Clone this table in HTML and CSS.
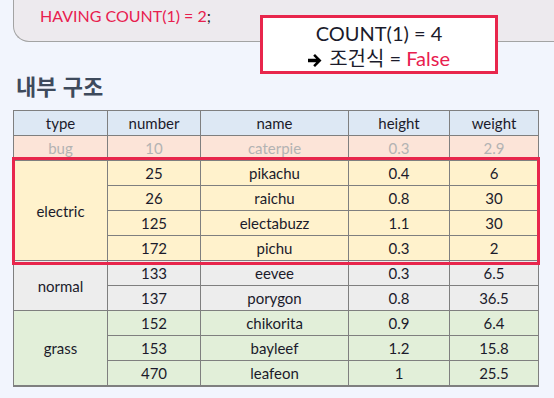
FILE: index.html
```html
<!DOCTYPE html>
<html lang="ko">
<head>
    <meta charset="UTF-8">
    <meta name="viewport" content="width=device-width, initial-scale=1.0">
    <title>내부 구조</title>
    <link rel="stylesheet" href="styles.css">
</head>
<body>
    <div class="code-box">
        <span class="keyword">HAVING COUNT(1) = 2</span>;
    </div>
    <div class="result-box">
        <div>COUNT(1) = 4</div>
        <div>
            <svg class="arrow" width="15" height="13" viewBox="0 0 15 13">
                <path d="M0 4.8 H8.2 L5.2 1.8 L7 0 L13.5 6.5 L7 13 L5.2 11.2 L8.2 8.2 H0 Z" fill="#000"/>
            </svg>
            조건식 = <span class="false">False</span>
        </div>
    </div>

    <h2>내부 구조</h2>

    <div class="table-wrap">
        <table>
            <thead>
                <tr>
                    <th class="col-type">type</th>
                    <th class="col-number">number</th>
                    <th class="col-name">name</th>
                    <th class="col-height">height</th>
                    <th class="col-weight">weight</th>
                </tr>
            </thead>
            <tbody>
                <tr class="bug">
                    <td>bug</td><td>10</td><td>caterpie</td><td>0.3</td><td>2.9</td>
                </tr>
                <tr class="electric">
                    <td rowspan="4">electric</td><td>25</td><td>pikachu</td><td>0.4</td><td>6</td>
                </tr>
                <tr class="electric">
                    <td>26</td><td>raichu</td><td>0.8</td><td>30</td>
                </tr>
                <tr class="electric">
                    <td>125</td><td>electabuzz</td><td>1.1</td><td>30</td>
                </tr>
                <tr class="electric">
                    <td>172</td><td>pichu</td><td>0.3</td><td>2</td>
                </tr>
                <tr class="normal">
                    <td rowspan="2">normal</td><td>133</td><td>eevee</td><td>0.3</td><td>6.5</td>
                </tr>
                <tr class="normal">
                    <td>137</td><td>porygon</td><td>0.8</td><td>36.5</td>
                </tr>
                <tr class="grass">
                    <td rowspan="3">grass</td><td>152</td><td>chikorita</td><td>0.9</td><td>6.4</td>
                </tr>
                <tr class="grass">
                    <td>153</td><td>bayleef</td><td>1.2</td><td>15.8</td>
                </tr>
                <tr class="grass">
                    <td>470</td><td>leafeon</td><td>1</td><td>25.5</td>
                </tr>
            </tbody>
        </table>
        <div class="highlight"></div>
    </div>
</body>
</html>
```

FILE: styles.css
```css
* {
    margin: 0;
    padding: 0;
    box-sizing: border-box;
}
body {
    font-family: Lato, "Noto Sans CJK KR", sans-serif;
    background-color: #f2f5fd;
    color: #1b1b2b;
    position: relative;
    min-height: 100vh;
}

/* 상단 코드 박스 */
.code-box {
    margin-left: 13px;
    height: 42px;
    padding-left: 26px;
    line-height: 32px;
    font-size: 16px;
    background-color: #edeaee;
    border-left: 1px solid #a3a3a3;
    border-bottom: 1px solid #a3a3a3;
    border-bottom-left-radius: 16px;
}
.keyword {
    color: #e8204e;
}

.result-box {
    position: absolute;
    left: 260px;
    top: 15px;
    width: 238px;
    height: 59px;
    background: #fff;
    border: 3px solid #e8264c;
    text-align: center;
    font-size: 20px;
    line-height: 25px;
    padding-top: 3px;
}
.arrow {
    vertical-align: -1px;
    margin-right: 1px;
}
.false {
    color: #e8204e;
}

h2 {
    margin: 28px 0 0 16px;
    font-size: 22px;
    line-height: 30px;
    font-weight: 700;
    font-family: "Noto Sans CJK KR", sans-serif;
    color: #3e4a5c;
}

/* 테이블 */
.table-wrap {
    position: relative;
    margin: 10px 0 0 13px;
    width: 525px;
}
table {
    border-collapse: collapse;
    width: 525px;
    table-layout: fixed;
    font-size: 15px;
    border-bottom: 2px solid #7f7f7f;
}
th, td {
    border: 1px solid #7f7f7f;
    height: 25px;
    text-align: center;
    font-weight: 400;
    padding: 0;
}
th {
    background-color: #dde8f4;
}
.col-type { width: 94px; }
.col-number { width: 93px; }
.col-name { width: 148px; }
.col-height { width: 101px; }
.col-weight { width: 89px; }

.bug td {
    background-color: #fce4d8;
    color: #b3b3b3;
}
.electric td {
    background-color: #fff2cc;
}
.normal td {
    background-color: #ededed;
}
.grass td {
    background-color: #e2efd9;
}

.highlight {
    position: absolute;
    left: -1px;
    top: 47px;
    width: 528px;
    height: 108px;
    border: 3px solid #e8264c;
}
```
